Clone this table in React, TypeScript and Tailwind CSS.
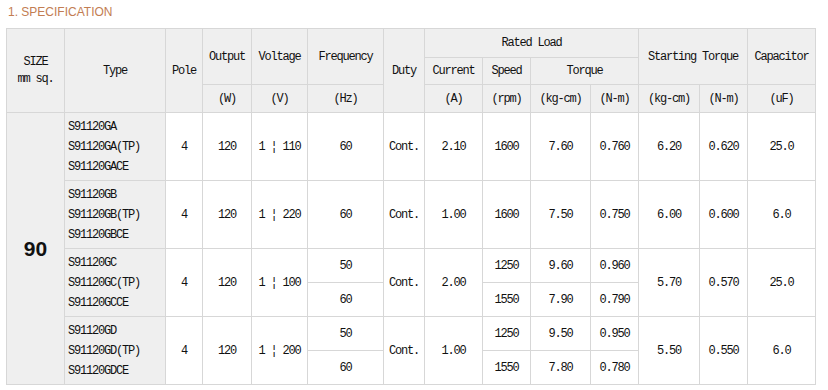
import React from "react";

type Group = {
  type: string[];
  volt: string;
  freq: string[];
  cur: string;
  speed: string[];
  tkg: string[];
  tnm: string[];
  skg: string;
  snm: string;
  cap: string;
};

const groups: Group[] = [
  { type: ["S91120GA", "S91120GA(TP)", "S91120GACE"], volt: "110", freq: ["60"], cur: "2.10", speed: ["1600"], tkg: ["7.60"], tnm: ["0.760"], skg: "6.20", snm: "0.620", cap: "25.0" },
  { type: ["S91120GB", "S91120GB(TP)", "S91120GBCE"], volt: "220", freq: ["60"], cur: "1.00", speed: ["1600"], tkg: ["7.50"], tnm: ["0.750"], skg: "6.00", snm: "0.600", cap: "6.0" },
  { type: ["S91120GC", "S91120GC(TP)", "S91120GCCE"], volt: "100", freq: ["50", "60"], cur: "2.00", speed: ["1250", "1550"], tkg: ["9.60", "7.90"], tnm: ["0.960", "0.790"], skg: "5.70", snm: "0.570", cap: "25.0" },
  { type: ["S91120GD", "S91120GD(TP)", "S91120GDCE"], volt: "200", freq: ["50", "60"], cur: "1.00", speed: ["1250", "1550"], tkg: ["9.50", "7.80"], tnm: ["0.950", "0.780"], skg: "5.50", snm: "0.550", cap: "6.0" },
];

// body sub-rows start at grid row 4
const rowStart = ["row-start-4", "row-start-5", "row-start-6", "row-start-7", "row-start-8", "row-start-9", "row-start-10", "row-start-11"];

function Cell({ className = "", gray = false, children }: { className?: string; gray?: boolean; children?: React.ReactNode }) {
  return (
    <div className={`flex items-center justify-center text-center ${gray ? "bg-[#efefef]" : "bg-white"} ${className}`}>
      {children}
    </div>
  );
}

function Split({ col, r, vals }: { col: string; r: number; vals: string[] }) {
  if (vals.length === 1) {
    return <Cell className={`${col} ${rowStart[r]} row-span-2`}>{vals[0]}</Cell>;
  }
  return (
    <>
      <Cell className={`${col} ${rowStart[r]}`}>{vals[0]}</Cell>
      <Cell className={`${col} ${rowStart[r + 1]}`}>{vals[1]}</Cell>
    </>
  );
}

export default function App() {
  return (
    <div className="w-[828px] h-[390px] bg-white">
      <div className="h-[28px] pl-[8px] pt-[5px] text-[12px] leading-[14px] text-[#c27d52] font-['Liberation_Sans',Arial,sans-serif]">
        1. SPECIFICATION
      </div>
      <div className="ml-[6px] inline-grid grid-cols-[57px_100px_36px_48px_55px_75px_40px_57px_47px_59px_47px_60px_47px_67px] grid-rows-[28px_26px_27px_repeat(8,33px)] gap-px p-px bg-[#d7d7d7] text-[12px] tracking-[-1.2px] text-[#111] font-['Liberation_Mono','Courier_New',monospace]">
        {/* header */}
        <Cell gray className="col-start-1 row-start-1 row-span-3 flex-col leading-[17px]">
          <span>SIZE</span>
          <span>mm sq.</span>
        </Cell>
        <Cell gray className="col-start-2 row-start-1 row-span-3">Type</Cell>
        <Cell gray className="col-start-3 row-start-1 row-span-3">Pole</Cell>
        <Cell gray className="col-start-4 row-start-1 row-span-2">Output</Cell>
        <Cell gray className="col-start-5 row-start-1 row-span-2">Voltage</Cell>
        <Cell gray className="col-start-6 row-start-1 row-span-2">Frequency</Cell>
        <Cell gray className="col-start-7 row-start-1 row-span-3">Duty</Cell>
        <Cell gray className="col-start-8 row-start-1 col-span-4">Rated Load</Cell>
        <Cell gray className="col-start-12 row-start-1 row-span-2 col-span-2">Starting Torque</Cell>
        <Cell gray className="col-start-14 row-start-1 row-span-2">Capacitor</Cell>
        <Cell gray className="col-start-8 row-start-2">Current</Cell>
        <Cell gray className="col-start-9 row-start-2">Speed</Cell>
        <Cell gray className="col-start-10 row-start-2 col-span-2">Torque</Cell>
        <Cell gray className="col-start-4 row-start-3">(W)</Cell>
        <Cell gray className="col-start-5 row-start-3">(V)</Cell>
        <Cell gray className="col-start-6 row-start-3">(Hz)</Cell>
        <Cell gray className="col-start-8 row-start-3">(A)</Cell>
        <Cell gray className="col-start-9 row-start-3">(rpm)</Cell>
        <Cell gray className="col-start-10 row-start-3">(kg-cm)</Cell>
        <Cell gray className="col-start-11 row-start-3">(N-m)</Cell>
        <Cell gray className="col-start-12 row-start-3">(kg-cm)</Cell>
        <Cell gray className="col-start-13 row-start-3">(N-m)</Cell>
        <Cell gray className="col-start-14 row-start-3">(uF)</Cell>

        {/* body */}
        <Cell gray className="col-start-1 row-start-4 row-span-8 text-[21px] font-bold tracking-normal text-[#111] font-['Liberation_Sans',Arial,sans-serif]">
          90
        </Cell>
        {groups.map((g, i) => {
          const r = i * 2;
          const rs = `${rowStart[r]} row-span-2`;
          return (
            <React.Fragment key={g.type[0]}>
              <div className={`col-start-2 ${rs} bg-[#efefef] flex flex-col justify-center pl-[3px] leading-[20px]`}>
                {g.type.map((t) => (
                  <span key={t}>{t}</span>
                ))}
              </div>
              <Cell className={`col-start-3 ${rs}`}>4</Cell>
              <Cell className={`col-start-4 ${rs}`}>120</Cell>
              <Cell className={`col-start-5 ${rs} whitespace-pre`}>{`1 ¦ ${g.volt}`}</Cell>
              <Split col="col-start-6" r={r} vals={g.freq} />
              <Cell className={`col-start-7 ${rs}`}>Cont.</Cell>
              <Cell className={`col-start-8 ${rs}`}>{g.cur}</Cell>
              <Split col="col-start-9" r={r} vals={g.speed} />
              <Split col="col-start-10" r={r} vals={g.tkg} />
              <Split col="col-start-11" r={r} vals={g.tnm} />
              <Cell className={`col-start-12 ${rs}`}>{g.skg}</Cell>
              <Cell className={`col-start-13 ${rs}`}>{g.snm}</Cell>
              <Cell className={`col-start-14 ${rs}`}>{g.cap}</Cell>
            </React.Fragment>
          );
        })}
      </div>
    </div>
  );
}
